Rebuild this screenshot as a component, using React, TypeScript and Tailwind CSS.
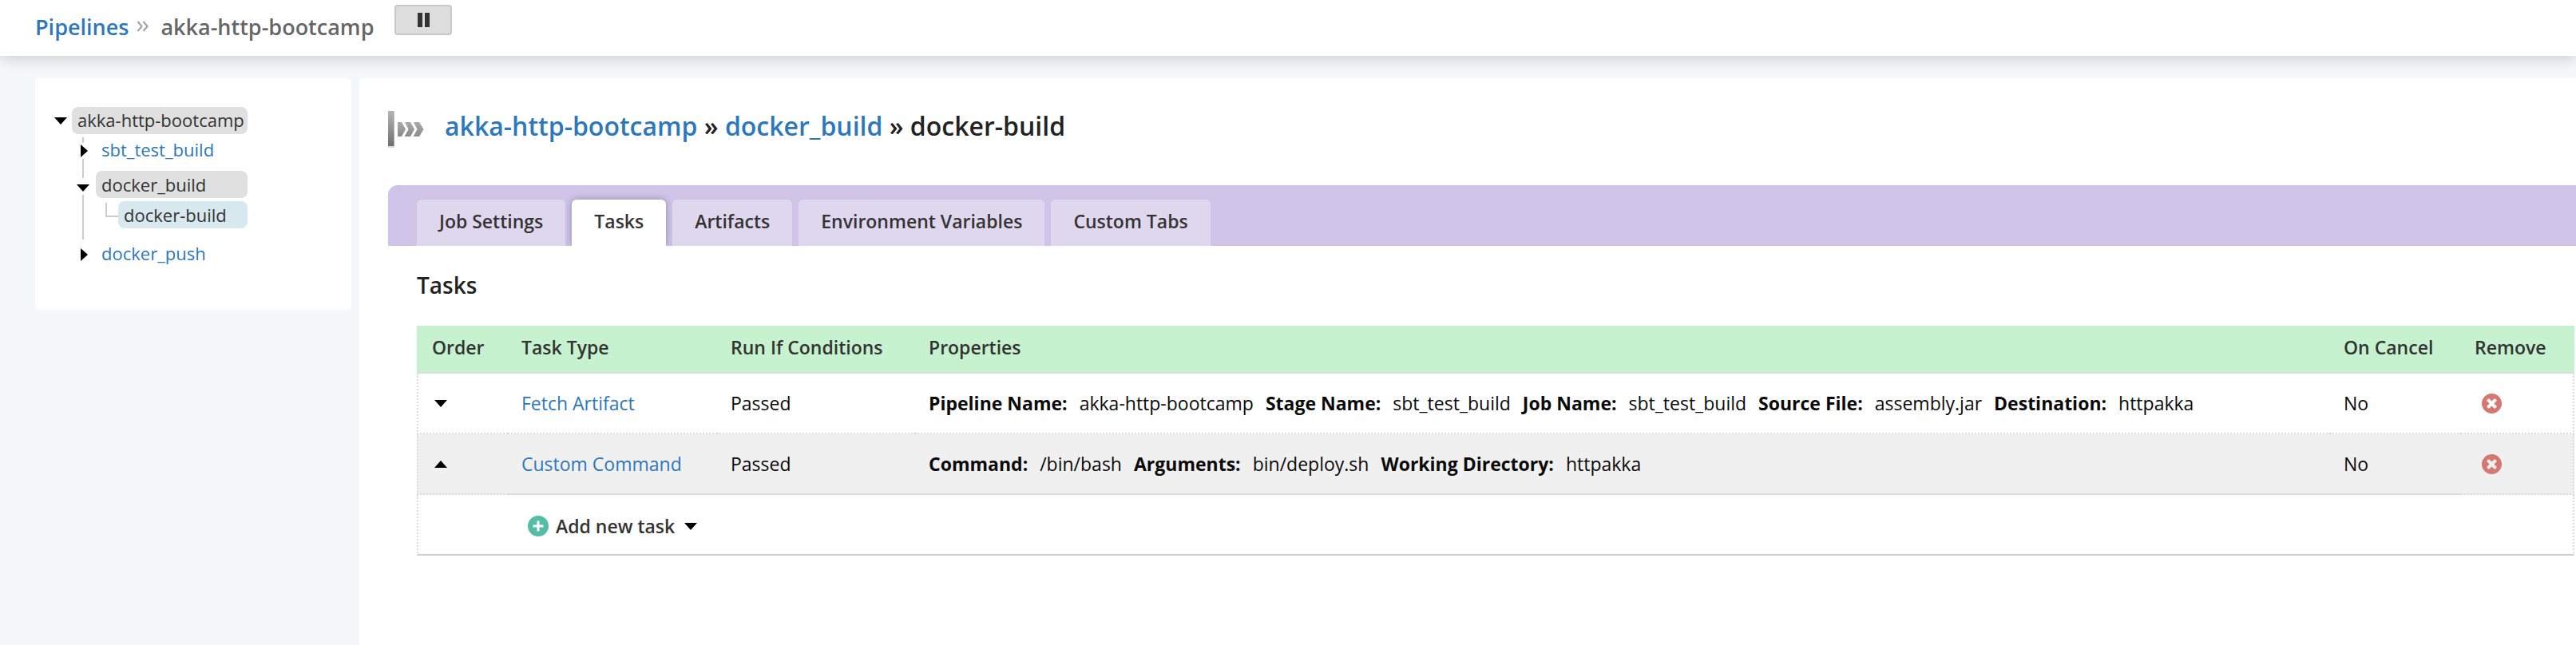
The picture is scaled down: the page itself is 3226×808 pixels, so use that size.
import React from "react";

type Property = { name: string; value: string };
type Task = { type: string; runIf: string; move: "up" | "down"; properties: Property[]; onCancel: string };

const tasks: Task[] = [
  {
    type: "Fetch Artifact",
    runIf: "Passed",
    move: "down",
    properties: [
      { name: "Pipeline Name:", value: "akka-http-bootcamp" },
      { name: "Stage Name:", value: "sbt_test_build" },
      { name: "Job Name:", value: "sbt_test_build" },
      { name: "Source File:", value: "assembly.jar" },
      { name: "Destination:", value: "httpakka" },
    ],
    onCancel: "No",
  },
  {
    type: "Custom Command",
    runIf: "Passed",
    move: "up",
    properties: [
      { name: "Command:", value: "/bin/bash" },
      { name: "Arguments:", value: "bin/deploy.sh" },
      { name: "Working Directory:", value: "httpakka" },
    ],
    onCancel: "No",
  },
];

const tabs = ["Job Settings", "Tasks", "Artifacts", "Environment Variables", "Custom Tabs"];

function Triangle({ dir }: { dir: "up" | "down" | "right" }) {
  if (dir === "right") {
    return (
      <svg className="block h-4 w-[9px]" viewBox="0 0 9 16" aria-hidden="true">
        <path d="M0 0L9 8L0 16Z" />
      </svg>
    );
  }
  return (
    <svg className="block h-[9px] w-4" viewBox="0 0 16 9" aria-hidden="true">
      <path d={dir === "down" ? "M0 0H16L8 9Z" : "M0 9H16L8 0Z"} />
    </svg>
  );
}

function DoubleChevron() {
  return (
    <svg className="h-[14px] w-4" viewBox="0 0 16 14" fill="none" stroke="#a6a6a6" strokeWidth="2.200" aria-hidden="true">
      <path d="M1.500 1L6.500 7L1.500 13M8.500 1L13.500 7L8.500 13" />
    </svg>
  );
}

function JobIcon() {
  return (
    <svg className="h-[46px] w-[46px]" viewBox="0 0 46 46" aria-hidden="true">
      <defs>
        <linearGradient id="bar" x1="0" y1="0" x2="0" y2="1">
          <stop offset="0" stopColor="#b4b4b4" />
          <stop offset="1" stopColor="#6f6f6f" />
        </linearGradient>
        <linearGradient id="arrows" x1="0" y1="0" x2="0" y2="1">
          <stop offset="0" stopColor="#ababab" />
          <stop offset="1" stopColor="#8a8a8a" />
        </linearGradient>
      </defs>
      <rect x="0" y="1" width="8" height="45" fill="#d9d9d9" />
      <rect x="0" y="0" width="7.500" height="44" fill="url(#bar)" />
      <path
        fill="url(#arrows)"
        d="M12 14H17L22 23L17 32H12ZM21 14H28L33 23L28 32H20.500L25.500 23ZM32 14H39L44.500 23L39 32H31.500L36.500 23Z"
      />
    </svg>
  );
}

function AddIcon() {
  return (
    <svg className="h-[26px] w-[26px]" viewBox="0 0 26 26" aria-hidden="true">
      <circle cx="13" cy="13" r="13" fill="#54bda6" />
      <path d="M13 6.500V19.500M6.500 13H19.500" stroke="#fff" strokeWidth="3" />
    </svg>
  );
}

function RemoveIcon() {
  return (
    <svg className="block h-[25px] w-[25px]" viewBox="0 0 25 25" aria-hidden="true">
      <path
        fill="#d67772"
        fillRule="evenodd"
        d="M12.500 0A12.500 12.500 0 1 1 12.500 25A12.500 12.500 0 1 1 12.500 0ZM12.500 9.600L9.700 6.800Q8.700 6 7.700 6.800L6.800 7.700Q6 8.700 6.800 9.700L9.600 12.500L6.800 15.300Q6 16.300 6.800 17.300L7.700 18.200Q8.700 19 9.700 18.200L12.500 15.400L15.300 18.200Q16.300 19 17.300 18.200L18.200 17.300Q19 16.300 18.200 15.300L15.400 12.500L18.200 9.700Q19 8.700 18.200 7.700L17.300 6.800Q16.300 6 15.300 6.800Z"
      />
    </svg>
  );
}

function Header() {
  return (
    <header className="flex h-[70px] items-start bg-white pt-[6px] pl-11 shadow-[0_2px_20px_rgba(0,0,0,0.2)]">
      <nav className="mt-2 flex items-start text-[27px] leading-10 font-semibold" aria-label="Breadcrumb">
        <a href="#pipelines" className="text-[#2d77bc]">Pipelines</a>
        <span className="mx-[10px] mt-3 flex"><DoubleChevron /></span>
        <span className="ml-1 text-[#666]">akka-http-bootcamp</span>
      </nav>
      <button
        type="button"
        aria-label="Pause pipeline"
        className="ml-[26px] flex h-[38px] w-[72px] items-center justify-center gap-[3px] rounded-[4px] border-2 border-[#c8c8c8] bg-[#ddd]"
      >
        <span className="h-[18px] w-[6px] bg-[#333]" />
        <span className="h-[18px] w-[6px] bg-[#333]" />
      </button>
    </header>
  );
}

function Line({ className }: { className: string }) {
  return <span className={`w-[2px] bg-[#ccc] ${className}`} />;
}

function Tree() {
  return (
    <aside className="w-[396px] shrink-0 self-start rounded-[5px] bg-white pt-9 pr-6 pb-[54px] pl-6">
      <ul className="flex w-fit flex-col text-[22px] leading-[34px] text-[#333]">
        <li className="flex gap-[6px]">
          <button type="button" aria-label="Collapse akka-http-bootcamp" className="self-center">
            <Triangle dir="down" />
          </button>
          <a href="#akka" className="rounded-[8px] bg-[#e0e0e0] pr-1 pb-[2px] pl-[7px] leading-8">akka-http-bootcamp</a>
        </li>
        <li className="flex min-h-[46px] gap-2 pl-7">
          <span className="flex w-4 flex-col items-center pt-1">
            <Line className="h-[7px]" />
            <button type="button" aria-label="Expand sbt_test_build" className="my-[2px] ml-[2px]">
              <Triangle dir="right" />
            </button>
            <Line className="flex-1" />
          </span>
          <a href="#sbt" className="mt-[2px] self-start px-[7px] text-[#2d77bc]">sbt_test_build</a>
        </li>
        <li className="flex min-h-[86px] gap-2 pl-7">
          <span className="flex w-4 flex-col items-center">
            <Line className="h-[9px]" />
            <button type="button" aria-label="Collapse docker_build" className="mt-2 mb-1">
              <Triangle dir="down" />
            </button>
            <Line className="flex-1" />
          </span>
          <div className="flex-1">
            <a href="#docker-build-stage" className="block rounded-[8px] bg-[#e0e0e0] px-[7px]">docker_build</a>
            <div className="mt-1 flex items-start pl-3">
              <span className="mt-[2px] h-[18px] w-4 border-b-2 border-l-2 border-[#ccc]" />
              <a href="#docker-build-job" className="flex-1 rounded-[8px] bg-[#d7e9ee] px-[7px]">docker-build</a>
            </div>
          </div>
        </li>
        <li className="flex gap-2 pl-7">
          <span className="flex w-4 flex-col items-center pt-[11px]">
            <button type="button" aria-label="Expand docker_push" className="ml-[2px]">
              <Triangle dir="right" />
            </button>
          </span>
          <a href="#push" className="px-[7px] text-[#2d77bc]">docker_push</a>
        </li>
      </ul>
    </aside>
  );
}

function TaskTable() {
  return (
    <table className="w-full table-fixed border-separate border-spacing-0 text-left text-[23px] leading-9 text-[#0a0a0a]">
      <colgroup>
        <col className="w-[114px]" />
        <col className="w-[262px]" />
        <col className="w-[248px]" />
        <col />
        <col className="w-[164px]" />
        <col className="w-[142px]" />
      </colgroup>
      <thead>
        <tr className="bg-[#c6f2cf] text-[#333]">
          {["Order", "Task Type", "Run If Conditions", "Properties", "On Cancel", "Remove"].map((h) => (
            <th
              key={h}
              scope="col"
              className="border-b-2 border-[#ddd] pt-[9px] pb-[13px] pl-[17px] font-semibold whitespace-nowrap first:pl-[19px]"
            >
              {h}
            </th>
          ))}
        </tr>
      </thead>
      <tbody>
        {tasks.map((t, i) => {
          const last = i === tasks.length - 1;
          const mid = last
            ? "border-b-2 border-solid border-[#ddd] py-[19px] pl-[17px]"
            : "border-b-2 border-dotted border-[#ddd] py-[19px] pl-[17px]";
          return (
            <tr key={t.type} className="even:bg-[#f0f0f0]">
              <td className="border-b-2 border-l-2 border-dotted border-[#ddd] pl-5">
                <button type="button" aria-label={`Move task ${t.move}`} className="block">
                  <Triangle dir={t.move} />
                </button>
              </td>
              <td className={mid}>
                <a href="#task" className="text-[#2d77bc]">{t.type}</a>
              </td>
              <td className={mid}>{t.runIf}</td>
              <td className={mid}>
                <ul className="flex gap-[15px]">
                  {t.properties.map((p) => (
                    <li key={p.name} className="flex gap-[15px] whitespace-nowrap">
                      <span className="font-bold">{p.name}</span>
                      <span>{p.value}</span>
                    </li>
                  ))}
                </ul>
              </td>
              <td className={mid}>{t.onCancel}</td>
              <td className="border-r-2 border-b-2 border-dotted border-[#ddd] pl-[26px]">
                <button type="button" aria-label={`Remove ${t.type}`} className="block">
                  <RemoveIcon />
                </button>
              </td>
            </tr>
          );
        })}
        <tr>
          <td className="border-b-2 border-l-2 border-[#ccc] border-l-[#ddd] [border-left-style:dotted]" />
          <td colSpan={4} className="border-b-2 border-[#ccc] pt-[21px] pb-[17px] pl-[25px]">
            <button type="button" className="flex items-center font-semibold text-[#333]">
              <AddIcon />
              <span className="mr-3 ml-[9px]">Add new task</span>
              <Triangle dir="down" />
            </button>
          </td>
          <td className="border-r-2 border-b-2 border-[#ccc] border-r-[#ddd] [border-right-style:dotted]" />
        </tr>
      </tbody>
    </table>
  );
}

export default function App() {
  return (
    <div className="flex min-h-screen flex-col bg-[#f4f8f9] font-['Open_Sans',sans-serif]">
      <Header />
      <div className="flex flex-1 gap-[10px] pt-7 pl-11">
        <Tree />
        <main className="min-w-0 flex-1 rounded-tl-[5px] bg-white pt-9 pl-9">
          <div className="flex items-start">
            <span className="mt-[5px] mr-[25px]"><JobIcon /></span>
            <h1 className="text-[32px] leading-[48px] font-semibold text-[#222]">
              <a href="#akka" className="text-[#2d77bc]">akka-http-bootcamp</a>
              {" » "}
              <a href="#docker-build-stage" className="text-[#2d77bc]">docker_build</a>
              {" » docker-build"}
            </h1>
          </div>
          <div
            role="tablist"
            className="mt-[47px] flex gap-2 overflow-hidden rounded-tl-[12px] bg-[#cfc4e7] pt-[18px] pl-9 text-[23px] leading-9 font-semibold text-[#333]"
          >
            {tabs.map((t) => (
              <button
                key={t}
                type="button"
                role="tab"
                aria-selected={t === "Tasks"}
                className="rounded-t-[6px] bg-[#dfd7ee] px-7 pt-[9px] pb-[13px] aria-selected:bg-white aria-selected:shadow-[0_0_8px_rgba(0,0,0,0.3)]"
              >
                {t}
              </button>
            ))}
          </div>
          <section className="pt-[29px] pr-[2px] pl-9">
            <h2 className="mb-[31px] text-[28px] leading-10 font-semibold text-[#222]">Tasks</h2>
            <TaskTable />
          </section>
        </main>
      </div>
    </div>
  );
}
